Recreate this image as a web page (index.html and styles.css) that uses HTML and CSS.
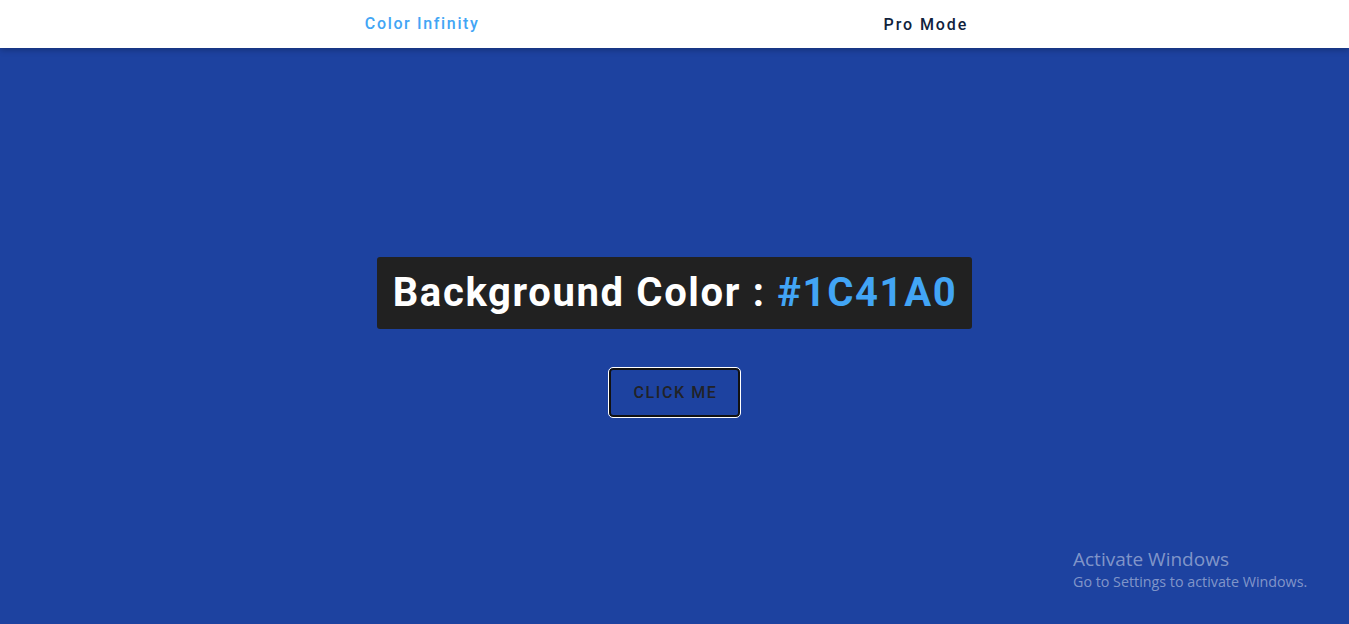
FILE: index.html
```html
<!DOCTYPE html>
<html>
<head>
<meta charset="utf-8">
<link rel="stylesheet" href="styles.css">
</head>
<body>
<header class="navbar">
  <a class="nav-brand">Color Infinity</a>
  <a class="nav-link">Pro Mode</a>
</header>
<main class="stage">
  <h1 class="color-label">Background Color : <span class="hex">#1C41A0</span></h1>
  <button class="click-btn">CLICK ME</button>
</main>
<div class="activate">
  <div class="activate-title">Activate Windows</div>
  <div class="activate-sub">Go to Settings to activate Windows.</div>
</div>
</body>
</html>
```
FILE: styles.css
```css
html, body {
  margin: 0;
  padding: 0;
  height: 100%;
}
body {
  background: #1d42a0;
  font-family: Roboto, "Liberation Sans", sans-serif;
  overflow: hidden;
  position: relative;
}
.navbar {
  height: 48px;
  background: #fff;
  display: flex;
  justify-content: center;
  align-items: center;
  gap: 404px;
  padding-right: 16px;
  box-shadow: 0 2px 6px rgba(0,0,0,0.25);
  position: relative;
  z-index: 1;
}
.nav-brand {
  color: #42a5f5;
  font-size: 16px;
  font-weight: 500;
  letter-spacing: 1.65px;
  margin-top: -2px;
}
.nav-link {
  color: #10223c;
  font-size: 16px;
  font-weight: 500;
  letter-spacing: 1.9px;
}
.stage {
  height: calc(100% - 48px);
  display: flex;
  flex-direction: column;
  align-items: center;
  padding-top: 209px;
  box-sizing: border-box;
}
.color-label {
  margin: 0;
  background: #212121;
  color: #fff;
  font-size: 40px;
  font-weight: 700;
  letter-spacing: 1.65px;
  padding: 0 15px 0 16px;
  height: 72px;
  line-height: 72px;
  border-radius: 3px;
}
.hex {
  color: #42a5f5;
}
.click-btn {
  margin-top: 39px;
  width: 131px;
  height: 49px;
  background: transparent;
  border: 2px solid #111;
  outline: 1px solid #fff;
  outline-offset: 0;
  border-radius: 4px;
  color: #212227;
  font-family: Roboto, "Liberation Sans", sans-serif;
  font-size: 16px;
  font-weight: 500;
  letter-spacing: 1.6px;
  padding: 0 0 0 2px;
}
.activate {
  position: absolute;
  left: 1073px;
  top: 547px;
  color: rgba(255,255,255,0.45);
  font-family: "Open Sans", "Noto Sans", sans-serif;
}
.activate-title {
  font-size: 19px;
  line-height: 24px;
}
.activate-sub {
  font-size: 14.3px;
  line-height: 22px;
}
```
